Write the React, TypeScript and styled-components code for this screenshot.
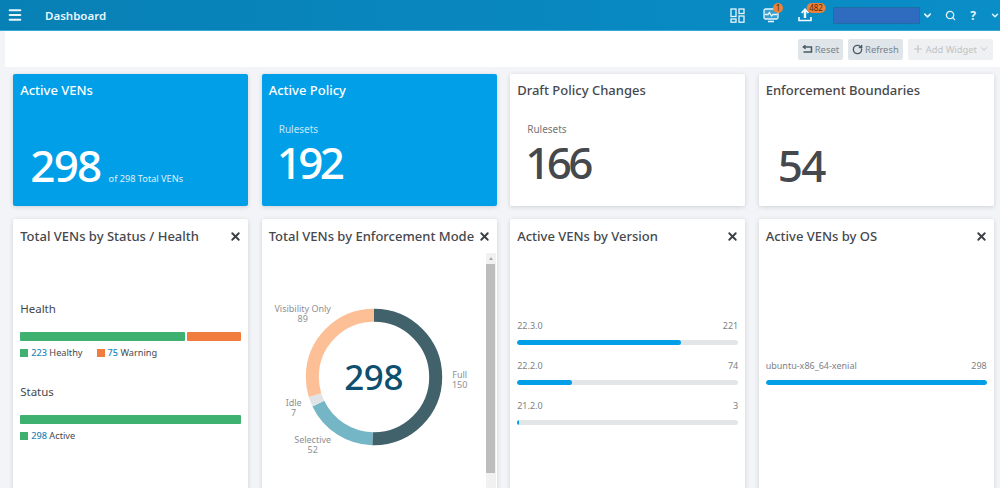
import React from 'react';
import styled, { createGlobalStyle } from 'styled-components';
import { X, Search, ChevronDown, Plus, RotateCw, Menu } from 'lucide-react';

const GlobalStyle = createGlobalStyle`
  html, body {
    margin: 0;
    height: 488px;
    overflow: hidden;
    background: #f3f4f7;
    font-family: "Noto Sans", "Open Sans", "Liberation Sans", sans-serif;
    color: #4a4d52;
  }
`;

const Page = styled.div`
  width: 1000px;
  height: 488px;
  overflow: hidden;
  display: flex;
  flex-direction: column;
`;

const TopBar = styled.header`
  height: 31px;
  flex: none;
  display: flex;
  align-items: center;
  background: linear-gradient(90deg, #0780b5, #0a8ec8);
  border-bottom: 1px solid #3aa7d4;
  box-sizing: border-box;
  color: #e8f5fb;
`;

const Burger = styled.div`
  width: 45px;
  padding-left: 7px;
  box-sizing: border-box;
  display: flex;
`;

const PageTitle = styled.div`
  flex: 1;
  font-size: 11.5px;
  font-weight: 600;
`;

const BarIcon = styled.div<{ $w: number; $gap?: number }>`
  position: relative;
  width: ${(p) => p.$w}px;
  margin-left: ${(p) => p.$gap ?? 0}px;
  height: 31px;
  flex: none;
  display: flex;
  align-items: center;
  justify-content: center;
`;

const Badge = styled.span<{ $x: number }>`
  position: absolute;
  top: 3px;
  left: ${(p) => p.$x}px;
  transform: translateX(-50%);
  height: 10px;
  min-width: 10px;
  padding: 0 2.5px;
  box-sizing: border-box;
  border-radius: 5px;
  background: #e8823c;
  color: #5a2a08;
  font-size: 8px;
  line-height: 10px;
  text-align: center;
`;

const UserBox = styled.div`
  width: 87px;
  height: 17px;
  margin-left: 11px;
  background: #2f6cc0;
  border: 1px solid #1d6fa8;
  box-sizing: border-box;
`;

const HelpMark = styled.span`
  font-size: 12px;
  font-weight: 700;
`;

const Content = styled.main`
  flex: 1;
  margin-left: 5px;
  background: #f3f4f7;
  display: flex;
  flex-direction: column;
`;

const ActionBar = styled.div`
  height: 36px;
  flex: none;
  background: #fff;
  display: flex;
  align-items: center;
  justify-content: flex-end;
  gap: 5px;
  padding: 0 7px 0 0;
`;

const ActionButton = styled.button<{ $off?: boolean }>`
  height: 21px;
  padding: 0 4px;
  border: 0;
  border-radius: 2px;
  display: flex;
  align-items: center;
  gap: 2px;
  font: inherit;
  font-size: 9.4px;
  background: ${(p) => (p.$off ? '#eef0f1' : '#dfe5e9')};
  color: ${(p) => (p.$off ? '#bfc4c7' : '#75838c')};

  svg {
    color: ${(p) => (p.$off ? '#bfc4c7' : '#4a5a64')};
  }
`;

const Grid = styled.div`
  display: grid;
  grid-template-columns: repeat(4, 235px);
  grid-template-rows: 132px 280px;
  column-gap: 13.5px;
  row-gap: 13px;
  padding: 7px 0 0 8.2px;
`;

const Card = styled.section<{ $blue?: boolean }>`
  background: ${(p) => (p.$blue ? '#019fe8' : '#fff')};
  color: ${(p) => (p.$blue ? '#fff' : '#45484d')};
  border-radius: 2px;
  box-shadow: 0 1px 4px rgba(70, 80, 90, 0.22);
  position: relative;
  overflow: hidden;
  display: flex;
  flex-direction: column;
`;

const CardTitle = styled.h3<{ $stat?: boolean }>`
  margin: 0;
  padding: ${(p) => (p.$stat ? '7px 7px 1px' : '8px 7px 0')};
  font-size: 13px;
  line-height: 19px;
  font-weight: 500;
  white-space: nowrap;
`;

const StatLabel = styled.div`
  font-size: 10px;
  line-height: 14px;
  height: 14px;
  padding-left: 17px;
  margin-top: 21px;
  opacity: 0.75;
`;

const StatRow = styled.div<{ $x: number; $top: number }>`
  display: flex;
  align-items: baseline;
  gap: 8px;
  padding-left: ${(p) => p.$x}px;
  margin-top: ${(p) => p.$top}px;
`;

const StatNumber = styled.span<{ $track?: number }>`
  font-size: 44px;
  font-weight: 500;
  line-height: 54px;
  letter-spacing: ${(p) => p.$track ?? -1.7}px;
`;

const StatNote = styled.span`
  font-size: 9.2px;
  opacity: 0.85;
`;

const CloseBtn = styled.span`
  position: absolute;
  top: 11px;
  right: 6px;
  display: flex;
  color: #3c3f44;
`;

const HealthBody = styled.div`
  padding: 0 7px;
  margin-top: 55px;
  display: flex;
  flex-direction: column;
`;

const SectionName = styled.div`
  font-size: 11.5px;
  line-height: 16px;
  margin-bottom: 15px;
`;

const StackBar = styled.div`
  display: flex;
  gap: 2px;
  height: 9px;
  margin-bottom: 6px;
`;

const StackPart = styled.div<{ $color: string; $grow: number }>`
  flex: ${(p) => p.$grow} 0 0;
  background: ${(p) => p.$color};
  border-radius: 1px;
`;

const Legend = styled.div`
  display: flex;
  gap: 14px;
  font-size: 9.2px;
  line-height: 12px;
  margin-bottom: 25px;
`;

const LegendItem = styled.span`
  display: flex;
  align-items: center;
  gap: 3px;
`;

const Swatch = styled.i<{ $color: string }>`
  width: 8px;
  height: 8px;
  background: ${(p) => p.$color};
`;

const Count = styled.b`
  font-weight: 500;
  color: #1f86b8;
`;

const ScrollTrack = styled.div`
  position: absolute;
  top: 34px;
  right: 1px;
  bottom: 0;
  width: 10px;
  background: #f1f1f1;
  display: flex;
  flex-direction: column;
  align-items: center;
`;

const ScrollArrow = styled.i`
  margin-top: 4px;
  width: 0;
  height: 0;
  border-left: 2.5px solid transparent;
  border-right: 2.5px solid transparent;
  border-bottom: 3px solid #a8a8a8;
`;

const ScrollThumb = styled.div`
  width: 9px;
  height: 209px;
  margin-top: 4px;
  background: #bdbdbd;
`;

const DonutWrap = styled.div`
  position: relative;
  flex: 1;
`;

const DonutChart = styled.svg`
  display: block;
  position: absolute;
  top: 0;
  left: 0;
`;

const DonutCenter = styled.div`
  position: absolute;
  top: 108px;
  left: 74px;
  width: 76px;
  text-align: center;
  font-size: 35px;
  font-weight: 500;
  letter-spacing: -0.4px;
  line-height: 46px;
  color: #0d4f6e;
`;

const DonutLabel = styled.div<{ $x: number; $y: number }>`
  position: absolute;
  left: ${(p) => p.$x}px;
  top: ${(p) => p.$y}px;
  transform: translateX(-50%);
  text-align: center;
  font-size: 9px;
  line-height: 10px;
  color: #8d9095;
  white-space: nowrap;
`;

const BarList = styled.div<{ $top: number }>`
  padding: 0 7px;
  margin-top: ${(p) => p.$top}px;
  display: flex;
  flex-direction: column;
  gap: 15px;
`;

const BarRow = styled.div`
  display: flex;
  flex-direction: column;
  gap: 8px;
`;

const BarHead = styled.div`
  display: flex;
  justify-content: space-between;
  font-size: 9px;
  line-height: 12px;
  color: #7d8186;
`;

const BarTrack = styled.div`
  height: 5px;
  border-radius: 3px;
  background: #e2e6e9;
  overflow: hidden;
`;

const BarFill = styled.div`
  height: 100%;
  border-radius: 3px;
  background: #019fe8;
`;

const r = 61.7;
const c = 2 * Math.PI * r;
const donut = [
  { value: 150, color: '#41626b' },
  { value: 52, color: '#74b6c6' },
  { value: 7, color: '#e0e4e6' },
  { value: 89, color: '#fcbf96' },
];

const Donut = () => {
  let offset = 0;
  return (
    <DonutChart width="223" height="240" viewBox="0 0 223 240">
      <g transform="rotate(-90 112 131)">
        {donut.map((d) => {
          const len = (d.value / 298) * c;
          const seg = (
            <circle
              key={d.color}
              cx="112"
              cy="131"
              r={r}
              fill="none"
              stroke={d.color}
              strokeWidth="13"
              strokeDasharray={`${len} ${c - len}`}
              strokeDashoffset={-offset}
            />
          );
          offset += len;
          return seg;
        })}
      </g>
    </DonutChart>
  );
};

const WidgetsIcon = () => (
  <svg width="15" height="15" viewBox="0 0 15 15" fill="none" stroke="#e8f5fb" strokeWidth="1.3">
    <rect x="1" y="1" width="5" height="7.5" />
    <rect x="9" y="1" width="5" height="4.5" />
    <rect x="1" y="11" width="5" height="3.2" />
    <rect x="9" y="8" width="5" height="6.2" />
  </svg>
);

const MonitorIcon = () => (
  <svg width="16" height="15" viewBox="0 0 16 15" fill="none" stroke="#e8f5fb" strokeWidth="1.3">
    <rect x="1" y="1" width="14" height="10" rx="1.5" fill="#e8f5fb" fillOpacity=".2" />
    <path d="M2 6.5h3l1.5-2 2 3.5 1.5-1.5h4" />
    <path d="M5 13.5h6" strokeWidth="1.6" />
  </svg>
);

const UploadIcon = () => (
  <svg width="14" height="14" viewBox="0 0 14 14" fill="none" stroke="#f2fafd" strokeWidth="1.6">
    <path d="M1 9v3.5h12V9" />
    <path d="M7 10V2" strokeWidth="2.4" />
    <path d="M3.6 5 7 1.4 10.4 5" strokeWidth="1.8" />
  </svg>
);

const ResetIcon = () => (
  <svg width="11" height="8" viewBox="0 0 11 8" fill="none" stroke="currentColor" strokeWidth="1.5">
    <path d="M1.5 2h8v5h-8" />
    <path d="M3.6.3 1.4 2l2.2 1.7" />
  </svg>
);

const Closer = () => (
  <CloseBtn>
    <X size={13} strokeWidth={3.5} />
  </CloseBtn>
);

export default function App() {
  return (
    <Page>
      <GlobalStyle />
      <TopBar>
        <Burger>
          <Menu size={16} strokeWidth={3} />
        </Burger>
        <PageTitle>Dashboard</PageTitle>
        <BarIcon $w={34}>
          <WidgetsIcon />
        </BarIcon>
        <BarIcon $w={34}>
          <MonitorIcon />
          <Badge $x={24}>1</Badge>
        </BarIcon>
        <BarIcon $w={34}>
          <UploadIcon />
          <Badge $x={28}>482</Badge>
        </BarIcon>
        <UserBox />
        <BarIcon $w={14}>
          <ChevronDown size={11} strokeWidth={3.4} />
        </BarIcon>
        <BarIcon $w={24} $gap={4}>
          <Search size={11} strokeWidth={2.8} />
        </BarIcon>
        <BarIcon $w={22}>
          <HelpMark>?</HelpMark>
        </BarIcon>
        <BarIcon $w={10} $gap={6}>
          <ChevronDown size={11} strokeWidth={3.4} />
        </BarIcon>
      </TopBar>
      <Content>
        <ActionBar>
          <ActionButton>
            <ResetIcon />
            Reset
          </ActionButton>
          <ActionButton>
            <RotateCw size={11} strokeWidth={3} />
            Refresh
          </ActionButton>
          <ActionButton $off>
            <Plus size={12} strokeWidth={2.2} />
            Add Widget
            <ChevronDown size={10} strokeWidth={2.4} />
          </ActionButton>
        </ActionBar>
        <Grid>
          <Card $blue>
            <CardTitle $stat>Active VENs</CardTitle>
            <StatRow $x={17} $top={37}>
              <StatNumber>298</StatNumber>
              <StatNote>of 298 Total VENs</StatNote>
            </StatRow>
          </Card>
          <Card $blue>
            <CardTitle $stat>Active Policy</CardTitle>
            <StatLabel>Rulesets</StatLabel>
            <StatRow $x={15} $top={-1}>
              <StatNumber $track={-3.6}>192</StatNumber>
            </StatRow>
          </Card>
          <Card>
            <CardTitle $stat>Draft Policy Changes</CardTitle>
            <StatLabel>Rulesets</StatLabel>
            <StatRow $x={15} $top={-1}>
              <StatNumber $track={-3.6}>166</StatNumber>
            </StatRow>
          </Card>
          <Card>
            <CardTitle $stat>Enforcement Boundaries</CardTitle>
            <StatRow $x={19} $top={37}>
              <StatNumber>54</StatNumber>
            </StatRow>
          </Card>

          <Card>
            <CardTitle>Total VENs by Status / Health</CardTitle>
            <Closer />
            <HealthBody>
              <SectionName>Health</SectionName>
              <StackBar>
                <StackPart $color="#3eb06f" $grow={165} />
                <StackPart $color="#f07c3e" $grow={54} />
              </StackBar>
              <Legend>
                <LegendItem>
                  <Swatch $color="#3eb06f" />
                  <span>
                    <Count>223</Count> Healthy
                  </span>
                </LegendItem>
                <LegendItem>
                  <Swatch $color="#f07c3e" />
                  <span>
                    <Count>75</Count> Warning
                  </span>
                </LegendItem>
              </Legend>
              <SectionName>Status</SectionName>
              <StackBar>
                <StackPart $color="#3eb06f" $grow={1} />
              </StackBar>
              <Legend>
                <LegendItem>
                  <Swatch $color="#3eb06f" />
                  <span>
                    <Count>298</Count> Active
                  </span>
                </LegendItem>
              </Legend>
            </HealthBody>
          </Card>

          <Card>
            <CardTitle>Total VENs by Enforcement Mode</CardTitle>
            <Closer />
            <ScrollTrack>
              <ScrollArrow />
              <ScrollThumb />
            </ScrollTrack>
            <DonutWrap>
              <Donut />
              <DonutCenter>298</DonutCenter>
              <DonutLabel $x={41} $y={58}>
                Visibility Only
                <br />
                89
              </DonutLabel>
              <DonutLabel $x={198} $y={124}>
                Full
                <br />
                150
              </DonutLabel>
              <DonutLabel $x={32} $y={152}>
                Idle
                <br />
                7
              </DonutLabel>
              <DonutLabel $x={51} $y={189}>
                Selective
                <br />
                52
              </DonutLabel>
            </DonutWrap>
          </Card>

          <Card>
            <CardTitle>Active VENs by Version</CardTitle>
            <Closer />
            <BarList $top={74}>
              <BarRow>
                <BarHead>
                  <span>22.3.0</span>
                  <span>221</span>
                </BarHead>
                <BarTrack>
                  <BarFill style={{ width: '74%' }} />
                </BarTrack>
              </BarRow>
              <BarRow>
                <BarHead>
                  <span>22.2.0</span>
                  <span>74</span>
                </BarHead>
                <BarTrack>
                  <BarFill style={{ width: '25%' }} />
                </BarTrack>
              </BarRow>
              <BarRow>
                <BarHead>
                  <span>21.2.0</span>
                  <span>3</span>
                </BarHead>
                <BarTrack>
                  <BarFill style={{ width: '1%' }} />
                </BarTrack>
              </BarRow>
            </BarList>
          </Card>

          <Card>
            <CardTitle>Active VENs by OS</CardTitle>
            <Closer />
            <BarList $top={114}>
              <BarRow>
                <BarHead>
                  <span>ubuntu-x86_64-xenial</span>
                  <span>298</span>
                </BarHead>
                <BarTrack>
                  <BarFill style={{ width: '100%' }} />
                </BarTrack>
              </BarRow>
            </BarList>
          </Card>
        </Grid>
      </Content>
    </Page>
  );
}
